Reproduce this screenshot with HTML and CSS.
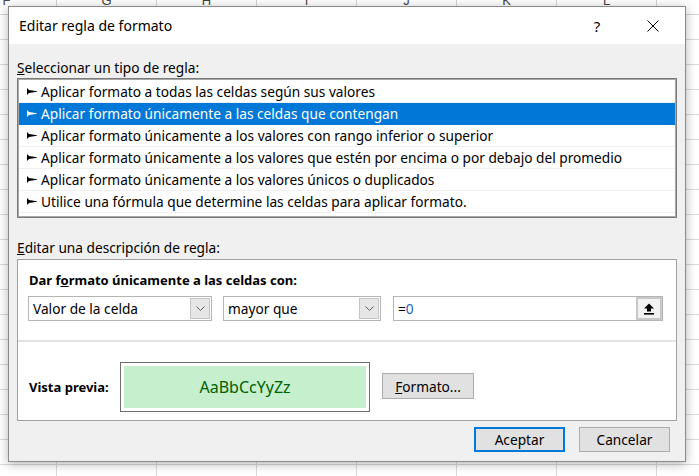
FILE: index.html
```html
<!DOCTYPE html>
<html lang="es">
<head>
  <meta charset="UTF-8">
  <title>Editar regla de formato</title>
  <link rel="stylesheet" href="styles.css">
</head>
<body>
  <div class="sheet-head">
    <div class="col">F</div>
    <div class="col">G</div>
    <div class="col">H</div>
    <div class="col">I</div>
    <div class="col">J</div>
    <div class="col">K</div>
    <div class="col">L</div>
    <div class="col">M</div>
  </div>
  <div class="sheet-grid"></div>

  <div class="dialog">
    <div class="title-bar">
      <div class="title">Editar regla de formato</div>
      <div class="title-help">?</div>
      <div class="title-close">
        <svg width="12" height="12" viewBox="0 0 12 12"><path d="M0.5 0.5 L11.5 11.5 M11.5 0.5 L0.5 11.5" stroke="#000" stroke-width="1" fill="none"/></svg>
      </div>
    </div>

    <div class="dialog-body">
      <div class="group-label"><u>S</u>eleccionar un tipo de regla:</div>
      <ul class="rule-list">
        <li class="rule"><span class="arrow"></span>Aplicar formato a todas las celdas según sus valores</li>
        <li class="rule selected"><span class="arrow"></span>Aplicar formato únicamente a las celdas que contengan</li>
        <li class="rule"><span class="arrow"></span>Aplicar formato únicamente a los valores con rango inferior o superior</li>
        <li class="rule"><span class="arrow"></span>Aplicar formato únicamente a los valores que estén por encima o por debajo del promedio</li>
        <li class="rule"><span class="arrow"></span>Aplicar formato únicamente a los valores únicos o duplicados</li>
        <li class="rule"><span class="arrow"></span>Utilice una fórmula que determine las celdas para aplicar formato.</li>
      </ul>

      <div class="group-label second"><u>E</u>ditar una descripción de regla:</div>
      <div class="desc-box">
        <div class="desc-top">
          <div class="desc-title">Dar f<u>o</u>rmato únicamente a las celdas con:</div>
          <div class="field-row">
            <div class="combo combo-wide">
              <span class="combo-text">Valor de la celda</span>
              <span class="combo-btn"><svg width="9" height="5" viewBox="0 0 9 5"><path d="M0.5 0.5 L4.5 4.5 L8.5 0.5" stroke="#606060" fill="none"/></svg></span>
            </div>
            <div class="combo combo-mid">
              <span class="combo-text">mayor que</span>
              <span class="combo-btn"><svg width="9" height="5" viewBox="0 0 9 5"><path d="M0.5 0.5 L4.5 4.5 L8.5 0.5" stroke="#606060" fill="none"/></svg></span>
            </div>
            <div class="ref-input">
              <span class="ref-text">=<span class="num">0</span></span>
              <span class="ref-btn"><svg width="12" height="12" viewBox="0 0 12 12"><path d="M6 0.5 L11 5.5 L8 5.5 L8 8.5 L4 8.5 L4 5.5 L1 5.5 Z" fill="#000"/><rect x="1" y="10" width="10" height="1.6" fill="#000"/></svg></span>
            </div>
          </div>
        </div>
        <div class="desc-bottom">
          <div class="preview-label">Vista previa:</div>
          <div class="preview">
            <div class="preview-inner">AaBbCcYyZz</div>
          </div>
          <button class="btn btn-format"><u>F</u>ormato...</button>
        </div>
      </div>

      <div class="actions">
        <button class="btn btn-default">Aceptar</button>
        <button class="btn">Cancelar</button>
      </div>
    </div>
  </div>
</body>
</html>
```

FILE: styles.css
```css
body {
  margin: 0;
  width: 699px;
  height: 476px;
  overflow: hidden;
  position: relative;
  background: #ffffff;
  font-family: 'Noto Sans', 'Open Sans', sans-serif;
  font-size: 13.7px;
  color: #000000;
}

.sheet-head {
  display: flex;
  height: 15px;
  margin-left: -43px;
  overflow: hidden;
  border-bottom: 1px solid #d4d4d4;
  box-sizing: border-box;
}

.col {
  flex: 0 0 100px;
  border-right: 1px solid #d4d4d4;
  box-sizing: border-box;
  text-align: center;
  font-family: 'Liberation Sans', Arial, sans-serif;
  font-size: 13px;
  line-height: 2px;
  color: #444444;
}

.sheet-grid {
  height: 461px;
  background-image:
    linear-gradient(to right, #d9d9d9 1px, transparent 1px),
    linear-gradient(to bottom, #d9d9d9 1px, transparent 1px);
  background-size: 100px 25px;
  background-position: 56px 24px;
}

.dialog {
  position: absolute;
  left: 8px;
  top: 6px;
  width: 678px;
  height: 456px;
  box-sizing: border-box;
  border: 1px solid #8a8a8a;
  background: #f0f0f0;
  box-shadow: 0 2px 10px rgba(0, 0, 0, 0.3);
  display: flex;
  flex-direction: column;
}

.title-bar {
  height: 37px;
  background: #ffffff;
  display: flex;
  align-items: center;
  padding-left: 10px;
}

.title {
  flex: 1;
  font-size: 14px;
}

.title-help {
  width: 20px;
  text-align: center;
  font-size: 15px;
  margin-right: 36px;
}

.title-close {
  width: 20px;
  display: flex;
  justify-content: center;
  margin-right: 22px;
}

.dialog-body {
  flex: 1;
  padding: 0 8px;
  display: flex;
  flex-direction: column;
}

.group-label {
  line-height: 16px;
  margin-top: 16px;
  margin-bottom: 2px;
}

.group-label.second {
  margin-top: 22px;
  margin-bottom: 3px;
}

.rule-list {
  list-style: none;
  margin: 0;
  padding: 2px 1px 3px 1px;
  height: 140px;
  box-sizing: border-box;
  background: #ffffff;
  border: 1px solid #7a7a7a;
  box-shadow: inset 0 0 0 1px #a8a8a8;
}

.rule {
  height: 22px;
  line-height: 21px;
  padding-left: 8px;
  border-bottom: 1px solid #f0f0f0;
  box-sizing: border-box;
  display: flex;
  align-items: center;
  white-space: nowrap;
}

.rule.selected {
  background: #0078d7;
  color: #ffffff;
  border-bottom-color: #0078d7;
}

.arrow {
  width: 10px;
  height: 7px;
  margin-right: 4px;
  background: #000000;
  clip-path: polygon(0 0, 20% 30%, 100% 45%, 100% 55%, 20% 70%, 0 100%);
}

.rule.selected .arrow {
  background: #ffffff;
}

.desc-box {
  height: 162px;
  box-sizing: border-box;
  background: #ffffff;
  border: 1px solid #a0a0a0;
  display: flex;
  flex-direction: column;
}

.desc-top {
  height: 82px;
  box-sizing: border-box;
  padding: 12px 0 0 10px;
  border-bottom: 2px solid #e3e3e3;
}

.desc-title {
  font-weight: bold;
  font-size: 13px;
  line-height: 16px;
  padding-left: 1px;
  margin-bottom: 8px;
}

.field-row {
  display: flex;
  gap: 11px;
}

.combo, .ref-input {
  height: 25px;
  box-sizing: border-box;
  border: 1px solid #b4b4b4;
  background: #ffffff;
  display: flex;
  align-items: center;
  padding: 1px;
}

.combo-wide {
  width: 184px;
}

.combo-mid {
  width: 158px;
}

.ref-input {
  width: 270px;
  margin-left: 1px;
  padding-right: 0;
}

.combo-text, .ref-text {
  flex: 1;
  padding-left: 3px;
}

.combo-btn {
  width: 20px;
  height: 21px;
  box-sizing: border-box;
  background: #e6e6e6;
  border: 1px solid #c4c4c4;
  display: flex;
  align-items: center;
  justify-content: center;
}

.num {
  color: #1f5fbf;
}

.ref-btn {
  width: 26px;
  height: 23px;
  box-sizing: border-box;
  background: #f2f2f2;
  border: 2px solid #c8c8c8;
  display: flex;
  align-items: center;
  justify-content: center;
}

.desc-bottom {
  flex: 1;
  display: flex;
  align-items: center;
  padding: 12px 0 0 11px;
}

.preview-label {
  width: 91px;
  font-weight: bold;
  font-size: 13px;
}

.preview {
  width: 250px;
  height: 50px;
  box-sizing: border-box;
  border: 1px solid #6e6e6e;
  padding: 3px;
  background: #ffffff;
}

.preview-inner {
  height: 100%;
  background: #c6efce;
  color: #006100;
  display: flex;
  align-items: center;
  justify-content: center;
  font-size: 16px;
}

.btn {
  font-family: 'Noto Sans', 'Open Sans', sans-serif;
  font-size: 13.7px;
  width: 91px;
  height: 25px;
  padding: 0;
  background: #e1e1e1;
  border: 1px solid #adadad;
  color: #000000;
}

.btn-format {
  width: 92px;
  height: 26px;
  margin-left: 12px;
  margin-bottom: 2px;
}

.btn-default {
  border: 2px solid #0078d7;
}

.actions {
  display: flex;
  justify-content: flex-end;
  gap: 14px;
  margin-top: 6px;
  padding-right: 7px;
}
```
